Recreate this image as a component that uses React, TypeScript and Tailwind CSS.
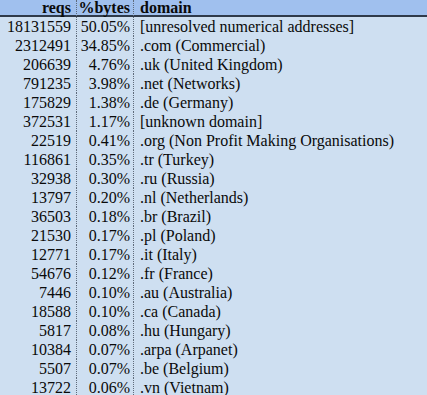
const rows: [string, string, string][] = [
  ["18131559", "50.05%", "[unresolved numerical addresses]"],
  ["2312491", "34.85%", ".com (Commercial)"],
  ["206639", "4.76%", ".uk (United Kingdom)"],
  ["791235", "3.98%", ".net (Networks)"],
  ["175829", "1.38%", ".de (Germany)"],
  ["372531", "1.17%", "[unknown domain]"],
  ["22519", "0.41%", ".org (Non Profit Making Organisations)"],
  ["116861", "0.35%", ".tr (Turkey)"],
  ["32938", "0.30%", ".ru (Russia)"],
  ["13797", "0.20%", ".nl (Netherlands)"],
  ["36503", "0.18%", ".br (Brazil)"],
  ["21530", "0.17%", ".pl (Poland)"],
  ["12771", "0.17%", ".it (Italy)"],
  ["54676", "0.12%", ".fr (France)"],
  ["7446", "0.10%", ".au (Australia)"],
  ["18588", "0.10%", ".ca (Canada)"],
  ["5817", "0.08%", ".hu (Hungary)"],
  ["10384", "0.07%", ".arpa (Arpanet)"],
  ["5507", "0.07%", ".be (Belgium)"],
  ["13722", "0.06%", ".vn (Vietnam)"],
];

export default function App() {
  return (
    <div className="w-[427px] h-[395px] overflow-hidden bg-[#cedff1] text-[#0a0a0a] font-['Liberation_Serif',serif] text-[16px] leading-[19px]">
      <div className="grid grid-cols-[77px_57px_1fr] h-[17px] bg-[#a0c0ee] border-b-2 border-[#2f3a4a] font-bold leading-[16px]">
        <div className="text-right pr-[5px] border-r border-dotted border-[#5f6b7b]">reqs</div>
        <div className="text-right pr-[3px] border-r border-dotted border-[#5f6b7b]">%bytes</div>
        <div className="pl-[6px]">domain</div>
      </div>
      {rows.map(([reqs, pct, domain]) => (
        <div key={domain} className="grid grid-cols-[77px_57px_1fr] h-[19px]">
          <div className="text-right pr-[5px] border-r border-dotted border-[#5f6b7b]">{reqs}</div>
          <div className="text-right pr-[3px] border-r border-dotted border-[#5f6b7b]">{pct}</div>
          <div className="pl-[6px] whitespace-nowrap">{domain}</div>
        </div>
      ))}
    </div>
  );
}
